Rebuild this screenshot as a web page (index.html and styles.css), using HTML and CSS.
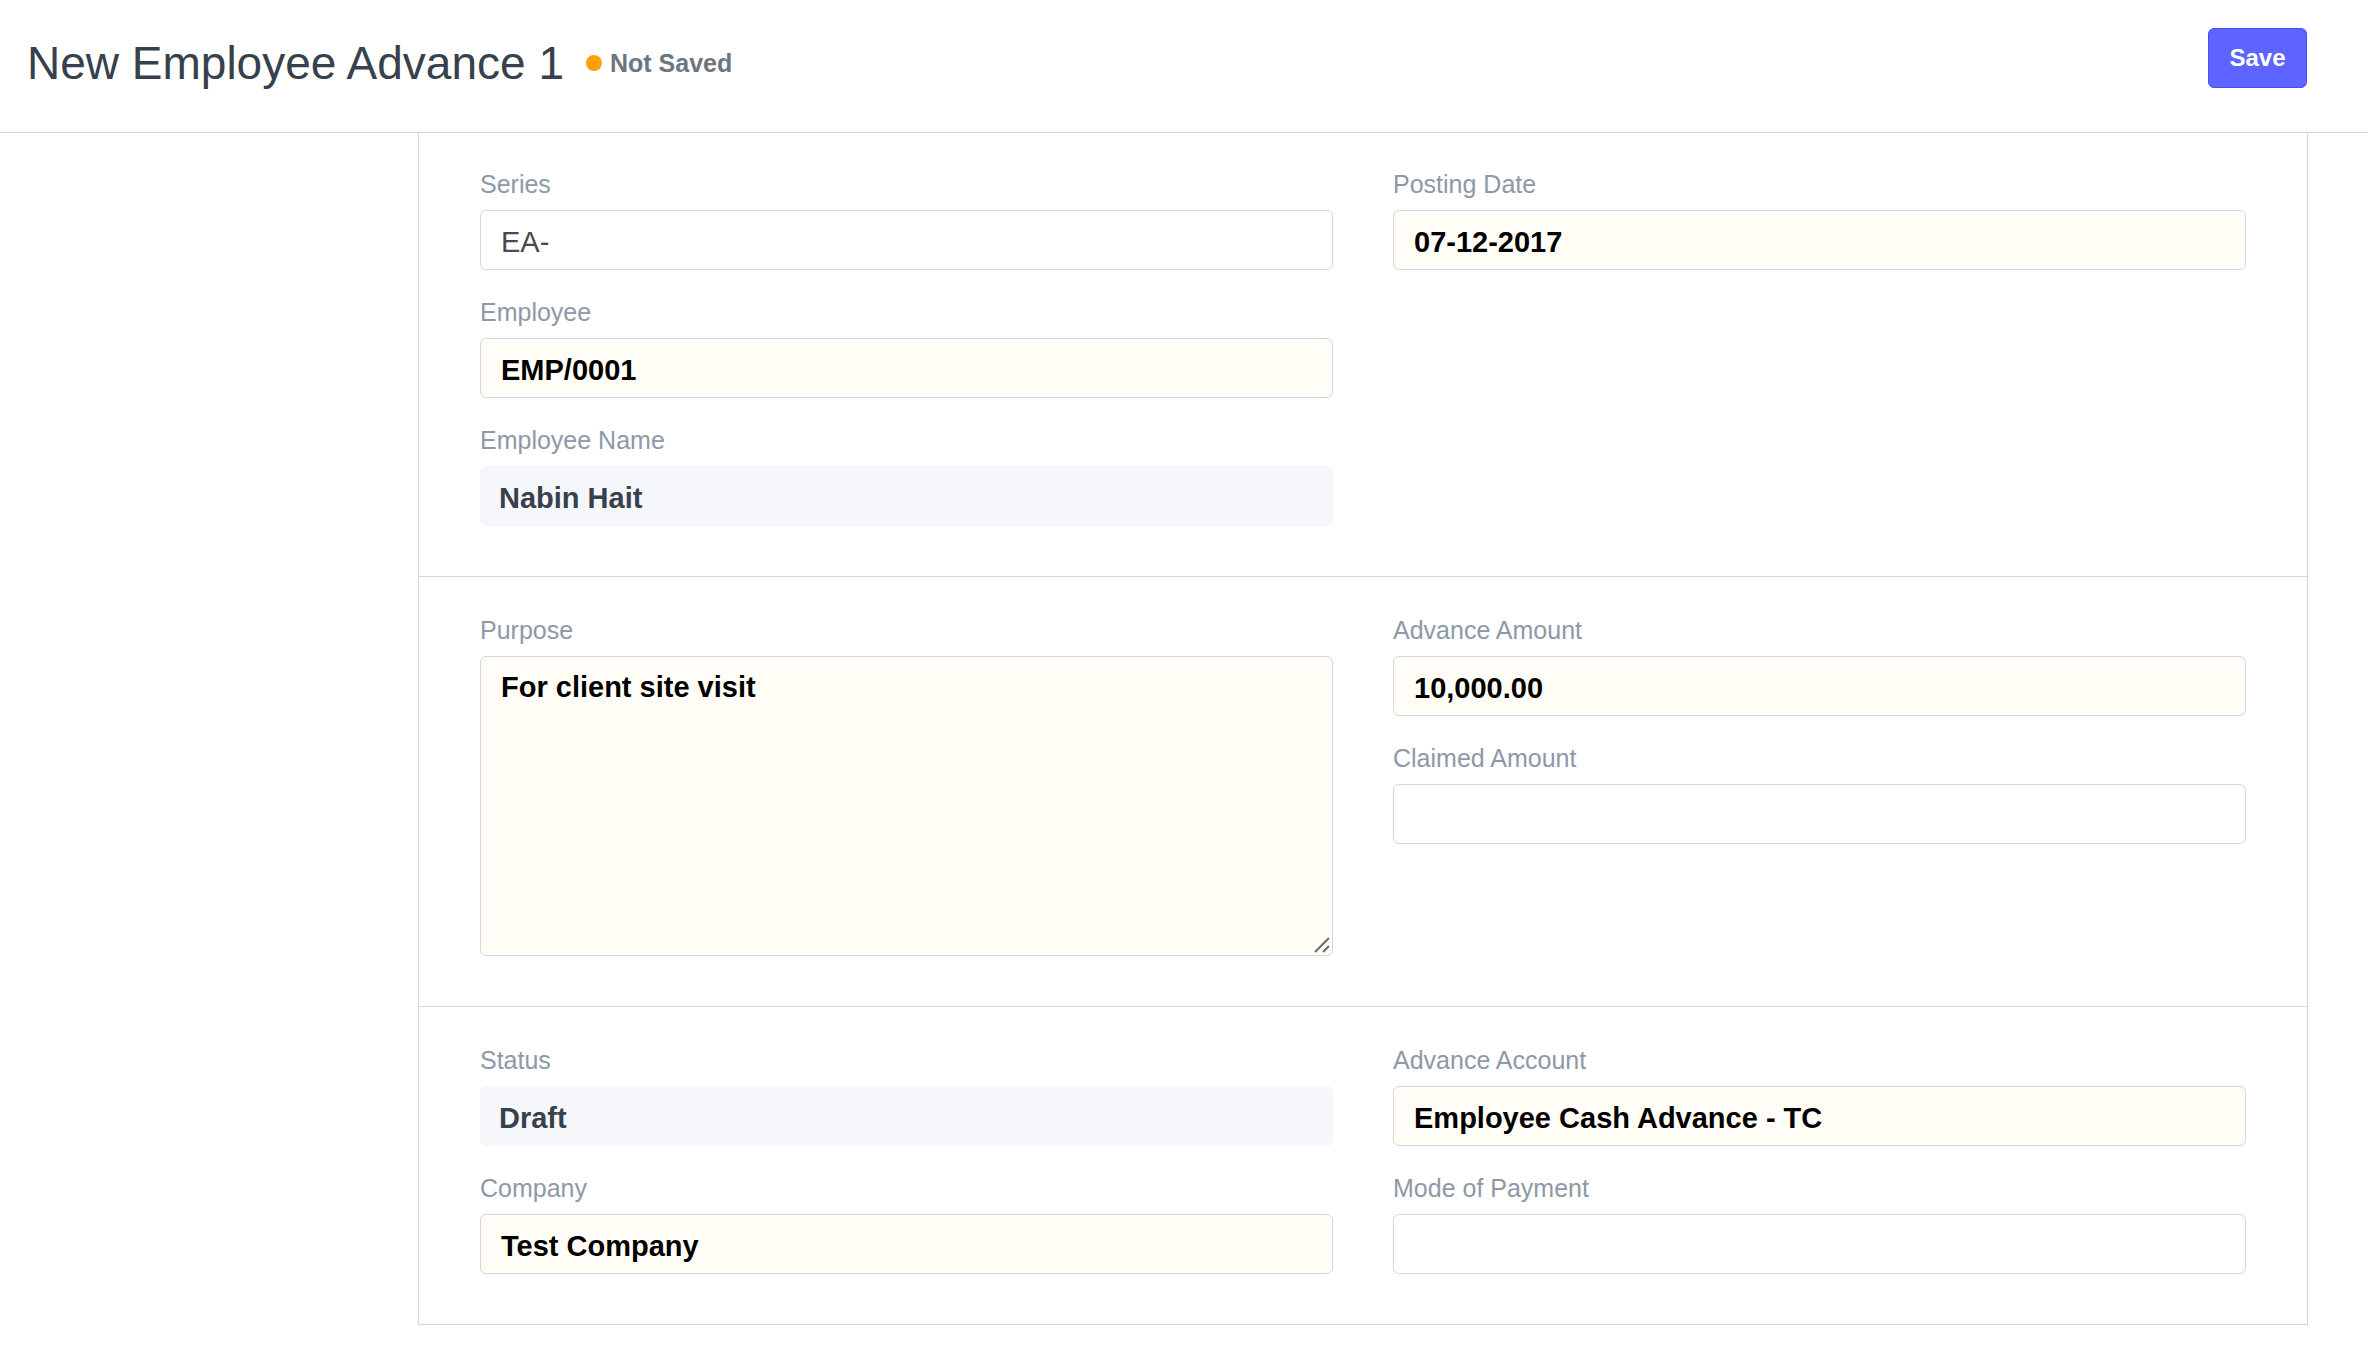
FILE: index.html
```html
<!DOCTYPE html>
<html lang="en">
<head>
<meta charset="utf-8">
<title>New Employee Advance 1</title>
<link rel="stylesheet" href="styles.css">
</head>
<body>
<header class="page-head">
  <div class="title-group">
    <h1 class="title">New Employee Advance 1</h1>
    <div class="status"><span class="dot"></span><span>Not Saved</span></div>
  </div>
  <button class="btn-save" type="button">Save</button>
</header>
<main class="layout">
  <div class="sidebar"></div>
  <div class="form">
    <section class="section first">
      <div class="col">
        <div class="field">
          <div class="label">Series</div>
          <div class="control plain">EA-</div>
        </div>
        <div class="field">
          <div class="label">Employee</div>
          <div class="control req">EMP/0001</div>
        </div>
        <div class="field">
          <div class="label">Employee Name</div>
          <div class="control static">Nabin Hait</div>
        </div>
      </div>
      <div class="col">
        <div class="field">
          <div class="label">Posting Date</div>
          <div class="control req">07-12-2017</div>
        </div>
      </div>
    </section>
    <section class="section">
      <div class="col">
        <div class="field">
          <div class="label">Purpose</div>
          <div class="control req textarea">For client site visit
            <svg class="grip" width="16" height="16" viewBox="0 0 16 16"><path d="M1 15 L15 1 M9 15 L15 9" stroke="#6b6b6b" stroke-width="2" fill="none"/></svg>
          </div>
        </div>
      </div>
      <div class="col">
        <div class="field">
          <div class="label">Advance Amount</div>
          <div class="control req">10,000.00</div>
        </div>
        <div class="field">
          <div class="label">Claimed Amount</div>
          <div class="control"></div>
        </div>
      </div>
    </section>
    <section class="section">
      <div class="col">
        <div class="field">
          <div class="label">Status</div>
          <div class="control static">Draft</div>
        </div>
        <div class="field">
          <div class="label">Company</div>
          <div class="control req">Test Company</div>
        </div>
      </div>
      <div class="col">
        <div class="field">
          <div class="label">Advance Account</div>
          <div class="control req">Employee Cash Advance - TC</div>
        </div>
        <div class="field">
          <div class="label">Mode of Payment</div>
          <div class="control"></div>
        </div>
      </div>
    </section>
  </div>
</main>
</body>
</html>
```
FILE: styles.css
```css
* { box-sizing: border-box; }
html, body { margin: 0; padding: 0; background: #ffffff; }
body {
  font-family: "Liberation Sans", Arial, Helvetica, sans-serif;
  color: #36414c;
}
.page-head {
  height: 133px;
  border-bottom: 1px solid #d1d8dd;
  display: flex;
  justify-content: space-between;
  align-items: flex-start;
  padding: 28px 61px 0 27px;
}
.title-group {
  display: flex;
  align-items: center;
  margin-top: 12px;
  height: 46px;
}
.title {
  margin: 0;
  font-size: 46px;
  line-height: 46px;
  font-weight: normal;
  color: #36414c;
}
.status {
  display: flex;
  align-items: center;
  gap: 8px;
  margin-left: 22px;
  font-size: 25px;
  font-weight: bold;
  color: #6c7680;
}
.dot {
  width: 16px;
  height: 16px;
  border-radius: 50%;
  background: #ffa00a;
}
.btn-save {
  width: 99px;
  height: 60px;
  border: 1px solid #474dfa;
  border-radius: 6px;
  background: #5e64ff;
  color: #ffffff;
  font-family: inherit;
  font-size: 24px;
  font-weight: bold;
  padding: 0;
}
.layout {
  display: flex;
}
.sidebar {
  width: 418px;
  flex: none;
}
.form {
  width: 1890px;
  flex: none;
  border-left: 1px solid #d1d8dd;
  border-right: 1px solid #d1d8dd;
}
.section {
  display: grid;
  grid-template-columns: 1fr 1fr;
  column-gap: 60px;
  padding: 37px 61px 24px;
  border-bottom: 1px solid #d1d8dd;
}
.section.first { padding-top: 35px; }
.col {
  display: flex;
  flex-direction: column;
}
.field { margin-bottom: 26px; }
.label {
  font-size: 25px;
  line-height: 32px;
  color: #8d99a6;
  margin-bottom: 10px;
}
.control {
  height: 60px;
  border: 1px solid #d1d8dd;
  border-radius: 6px;
  padding: 4px 19px 0 20px;
  display: flex;
  align-items: center;
  font-size: 29px;
  background: #ffffff;
  white-space: pre;
}
.control.plain { color: #474a4f; }
.control.req {
  background: #fffdf5;
  font-weight: bold;
  color: #000000;
}
.control.static {
  background: #f5f7fa;
  border-color: #f5f7fa;
  padding-left: 18px;
  font-weight: bold;
  color: #36414c;
}
.control.textarea {
  height: 300px;
  align-items: flex-start;
  padding-top: 14px;
  position: relative;
}
.grip {
  position: absolute;
  right: 2px;
  bottom: 2px;
}
```
